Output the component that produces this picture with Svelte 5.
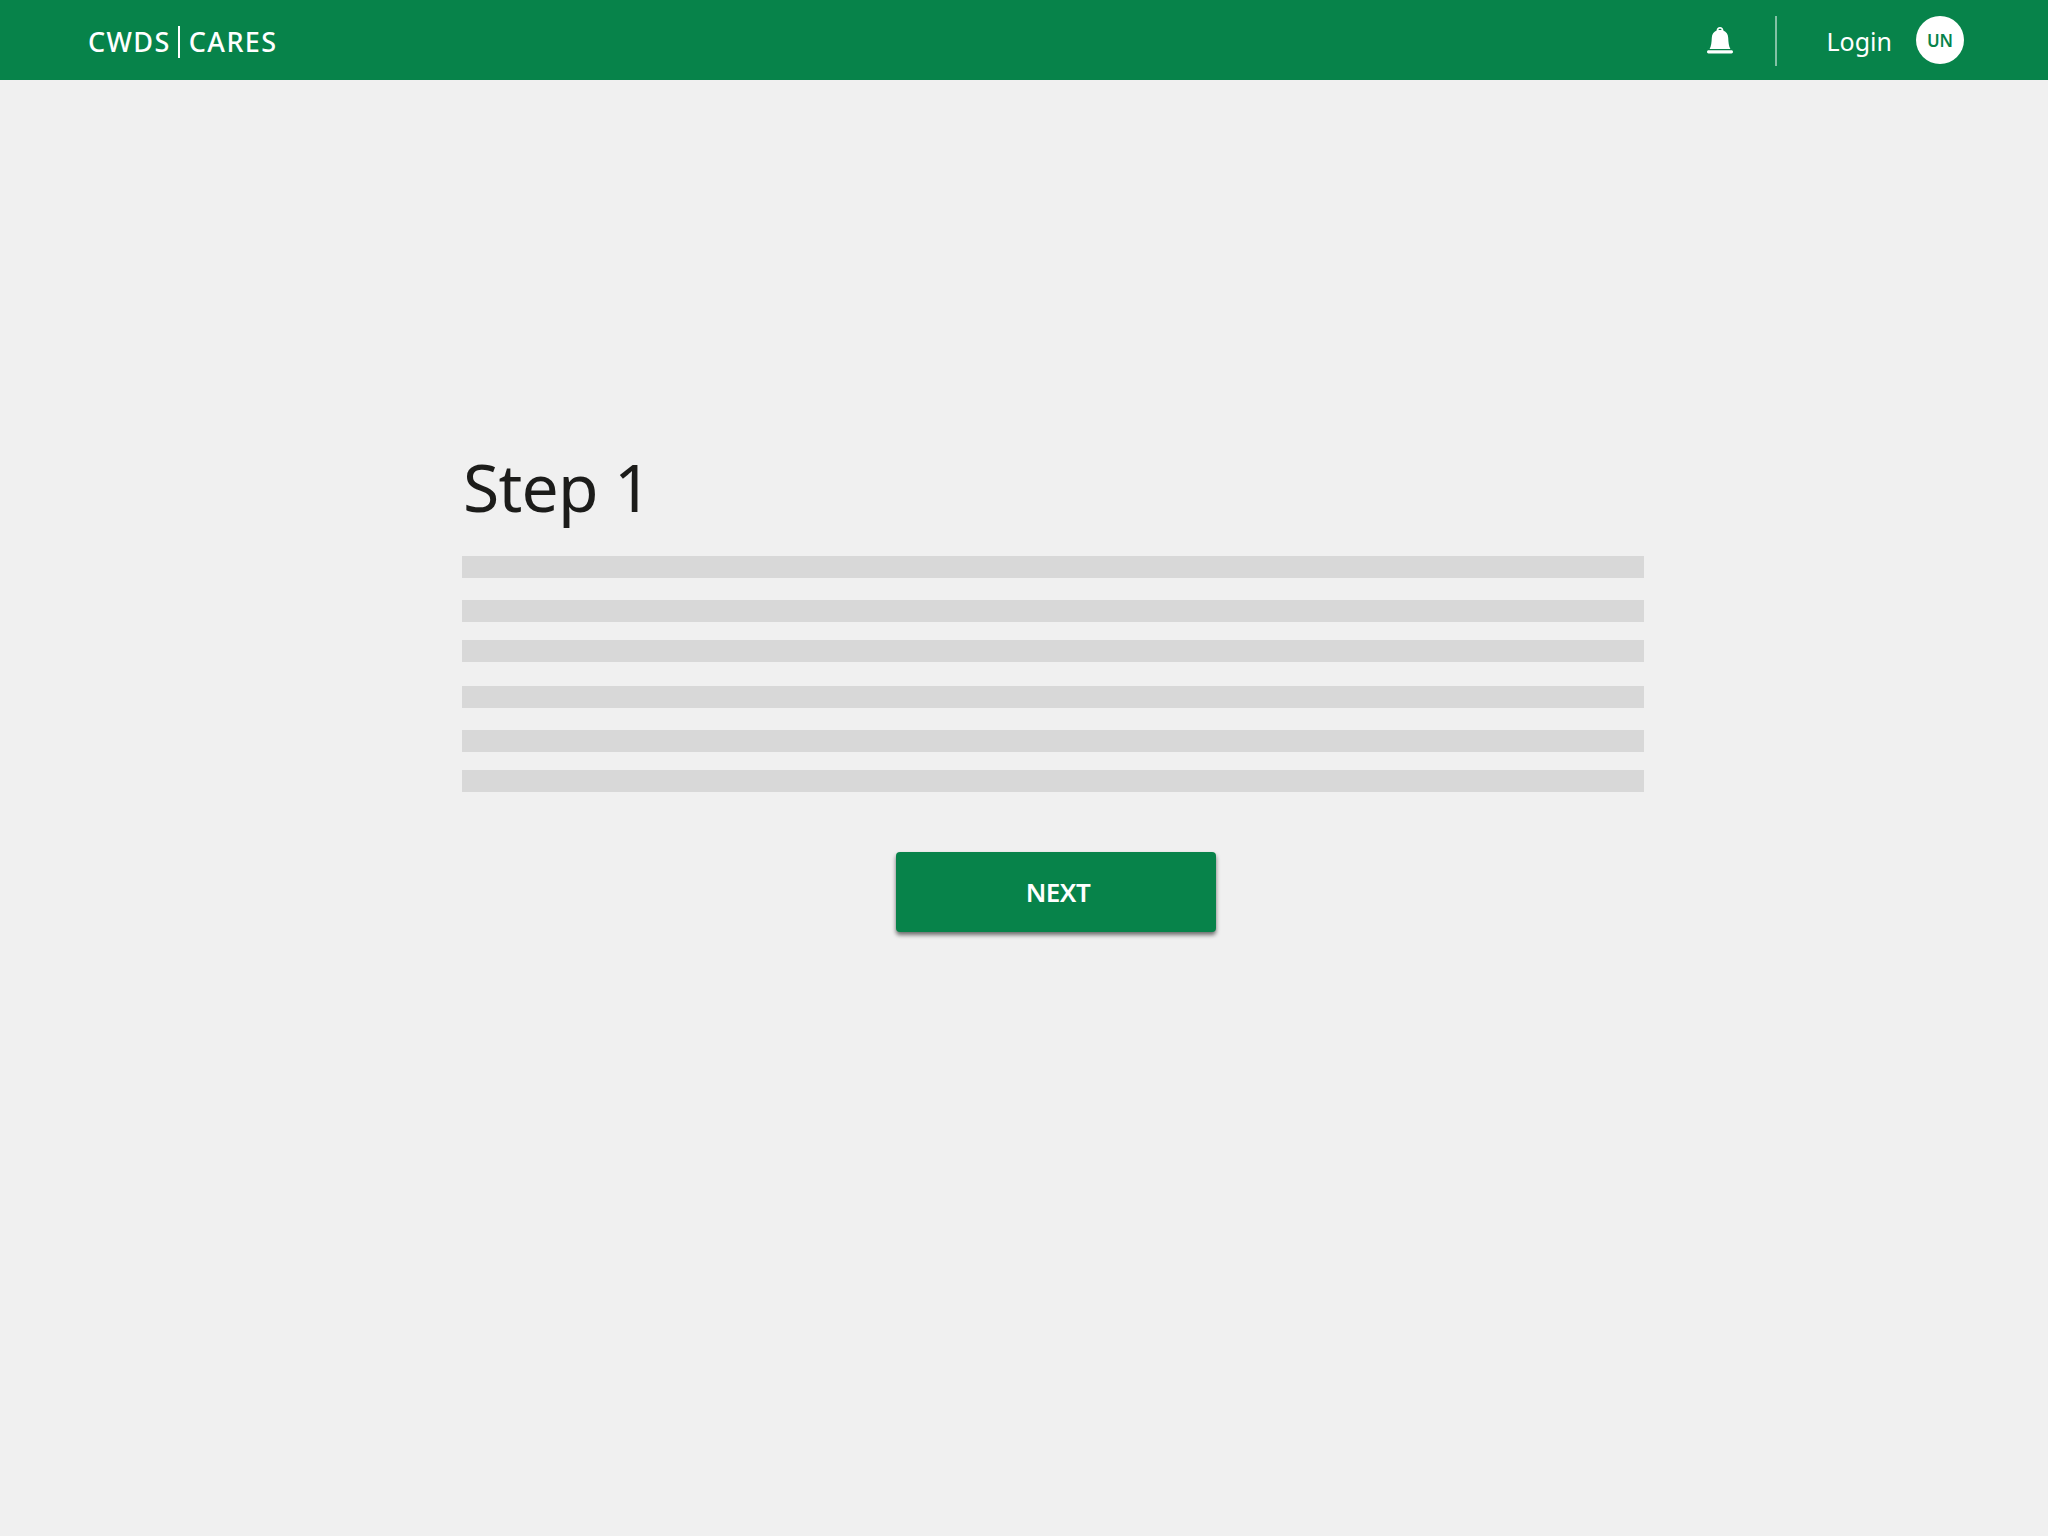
<script>
	const groups = ['a', 'b', 'c', 'd', 'b', 'c'];
</script>

<div class="page">
	<header class="topbar">
		<div class="brand">CWDS <span class="pipe"></span> CARES</div>
		<div class="actions">
			<svg class="bell" viewBox="0 0 26 28" width="26" height="28" aria-hidden="true">
				<path
					fill="#fff"
					fill-rule="evenodd"
					d="M13 0c2 0 3.400 1.400 3.400 3.600 3 1.200 4.600 3.800 4.800 7.200.2 4.300.6 8.400 2.200 11.200H2.600C4.200 19.200 4.600 15.100 4.800 10.800 5 7.400 6.600 4.800 9.600 3.600 9.600 1.400 11 0 13 0zm0 1.700c-.9 0-1.600.7-1.800 1.400.6-.1 1.200-.2 1.800-.2s1.200.1 1.800.2c-.2-.7-.9-1.400-1.800-1.400zM1.500 23.200h23c.8 0 1.500.7 1.500 1.600s-.7 1.600-1.500 1.600h-23c-.8 0-1.500-.7-1.500-1.600s.7-1.600 1.500-1.600z"
				/>
			</svg>
			<span class="divider"></span>
			<span class="login">Login</span>
			<span class="avatar">UN</span>
		</div>
	</header>

	<main class="content">
		<h1>Step 1</h1>
		<div class="lines">
			{#each groups as gap}
				<div class="line {gap}"></div>
			{/each}
		</div>
		<button type="button" class="next">NEXT</button>
	</main>
</div>

<style>
	:global(body) {
		background: #f0f0f0;
		font-family: 'Noto Sans', sans-serif;
	}

	.page {
		min-height: 1536px;
		background: #f0f0f0;
	}

	.topbar {
		box-sizing: border-box;
		height: 80px;
		background: #07834a;
		color: #fff;
		display: flex;
		align-items: center;
		justify-content: space-between;
		padding: 2px 84px 0 88px;
	}

	.brand {
		font-size: 27px;
		font-weight: 500;
		letter-spacing: 1.4px;
		display: flex;
		align-items: center;
		gap: 3px;
	}

	.pipe {
		width: 2px;
		height: 32px;
		background: #fff;
		margin: 2px 6px 0 4px;
	}

	.actions {
		display: flex;
		align-items: center;
	}

	.divider {
		width: 2px;
		height: 50px;
		background: rgba(255, 255, 255, 0.5);
		margin: 0 49px 0 42px;
	}

	.login {
		font-size: 25px;
		margin-right: 24px;
	}

	.avatar {
		width: 48px;
		height: 48px;
		margin-top: -2px;
		border-radius: 50%;
		background: #fff;
		color: #07834a;
		font-size: 17px;
		font-weight: 600;
		display: flex;
		align-items: center;
		justify-content: center;
	}

	.content {
		width: 1182px;
		margin-left: 462px;
		padding-top: 358px;
		display: flex;
		flex-direction: column;
	}

	h1 {
		margin: 0 0 0 1px;
		height: 118px;
		font-size: 66px;
		font-weight: 400;
		letter-spacing: -0.8px;
		line-height: 96px;
		color: #1c1c1a;
	}

	.line {
		height: 22px;
		background: #d8d8d8;
	}

	.line.b {
		margin-top: 22px;
	}

	.line.c {
		margin-top: 18px;
	}

	.line.d {
		margin-top: 24px;
	}

	.next {
		align-self: flex-start;
		margin: 60px 0 0 434px;
		width: 320px;
		height: 80px;
		border: none;
		border-radius: 4px;
		background: #07834a;
		color: #fff;
		font-family: inherit;
		font-size: 26px;
		font-weight: 600;
		letter-spacing: -0.5px;
		padding: 0 0 0 4px;
		box-shadow: 0 3px 4px rgba(0, 0, 0, 0.55);
	}
</style>
